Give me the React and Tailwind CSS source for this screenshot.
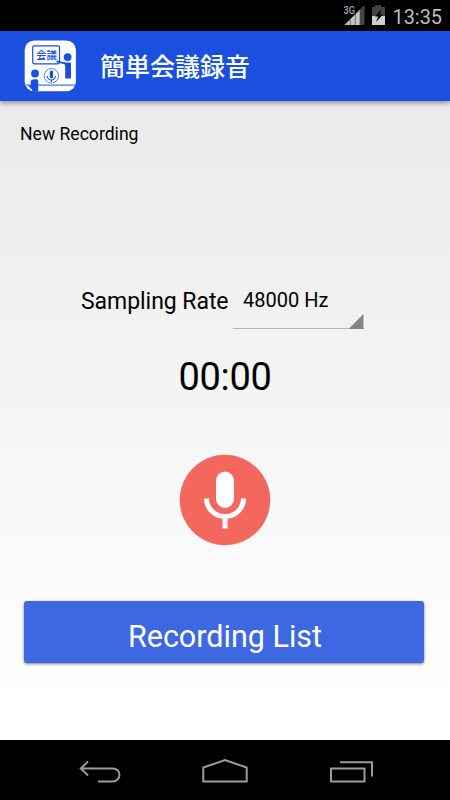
function StatusBar() {
  return (
    <div className="flex h-[31px] justify-end bg-black">
      <svg width="120" height="31" viewBox="330 0 120 31">
        <text x="343.5" y="14.2" fill="#a8a8a8" fontSize="10.5" fontWeight="500" textLength="11.5" lengthAdjust="spacingAndGlyphs">
          3G
        </text>
        <path d="M364.5 5v20h-20z" fill="#444" />
        <path d="M360 9.5V25h-15.5z" fill="#c3c3c3" />
        <path d="M350.3 18v7M355.4 14v11M360 9v16" stroke="#555" strokeWidth="0.7" />
        <path d="M372 7h3V5h6v2h4v9h-13z" fill="#444" />
        <path d="M372 16h13v9h-13z" fill="#cfcfcf" />
        <path d="M381.5 9l-6.5 7.4h3.2l-2.2 5.6 7-7.6h-3.3z" fill="#000" />
        <text x="392.5" y="23.7" fill="#bebebe" fontSize="21" textLength="49.5" lengthAdjust="spacingAndGlyphs">
          13:35
        </text>
      </svg>
    </div>
  );
}

function AppLogo() {
  return (
    <svg width="52" height="52" viewBox="24 40.5 52 52">
      <rect x="24.7" y="41" width="51.2" height="50.8" rx="9.5" fill="#fff" />
      <g fill="none" stroke="#1a4fdf">
        <rect x="32.7" y="46.3" width="26.8" height="18" rx="1.5" strokeWidth="1.2" />
        <path d="M26 85.6h5M38 85.6h37.5" strokeWidth="1" />
        <circle cx="51.4" cy="76.3" r="7.2" strokeWidth="0.7" />
        <path d="M47.4 76.5a4 4 0 0 0 8 0M51.4 80.5v2" strokeWidth="1.1" />
        <path d="M56.5 61.8l8.5 2" strokeWidth="1.7" />
      </g>
      <g fill="#1a4fdf">
        <circle cx="67.6" cy="57.6" r="3.9" />
        <path d="M63.5 63h6a1.5 1.5 0 0 1 1.5 1.5V79h-5.8V66z" />
        <circle cx="35" cy="74" r="3.9" />
        <path d="M33.5 79.8h3.2a1.5 1.5 0 0 1 1.5 1.5V92h-6v-1.8l-4.5-4.3h3V81.3z" />
        <rect x="49.8" y="71" width="3.3" height="7.8" rx="1.65" />
        <text x="36" y="59.2" fontSize="10.5" fontWeight="500" textLength="21" className="font-['Noto_Sans_CJK_JP',sans-serif]">
          会議
        </text>
      </g>
    </svg>
  );
}

function Header() {
  return (
    <header className="relative flex h-[70px] items-center bg-[#1a4fdf] pl-6 shadow-[0_2px_5px_rgba(0,0,0,0.4)]">
      <AppLogo />
      <h1 className="ml-6 pb-0.5 font-['Noto_Sans_CJK_JP',sans-serif] text-[25px] leading-9 font-medium text-white">
        簡単会議録音
      </h1>
    </header>
  );
}

function RateSelect() {
  return (
    <button className="flex h-[49px] w-[131px] shrink-0 flex-col text-left">
      <span className="pt-1.5 pl-2.5 text-[20px] leading-[26px]">48000 Hz</span>
      <svg className="mt-px shrink-0" width="131" height="16" viewBox="0 0 131 16">
        <path d="M0 14.5h131" stroke="#b4b4b4" />
        <path d="M130.5 0v15h-15z" fill="#858585" />
      </svg>
    </button>
  );
}

function RecordButton() {
  return (
    <button className="mx-auto mt-[54px] block h-[92px] w-[92px]" aria-label="Record">
      <svg width="92" height="92" viewBox="179 454 92 92">
        <circle cx="225" cy="500" r="45" fill="#f4675c" stroke="#d6655d" strokeWidth="0.5" />
        <rect x="216" y="471.5" width="18" height="36.5" rx="9" fill="#fff" />
        <path d="M206.5 498.5a18.5 18 0 0 0 37 0M225 516v12.5" fill="none" stroke="#fff" strokeWidth="5" />
      </svg>
    </button>
  );
}

function NavBar() {
  return (
    <nav className="h-[60px] bg-black">
      <svg width="450" height="60" viewBox="0 740 450 60" fill="none" stroke="#9b9b9b" strokeWidth="2">
        <path d="M88 761.5l-7.2 7 7.2 7M81 768.5h32a6.4 6.4 0 0 1 0 12.9H98" />
        <path d="M203.3 781.5v-14l21.7-7.4 21.7 7.4v14z" />
        <path d="M331 768.5h33.5v13H331zM340 762.3h32v14.2" />
      </svg>
    </nav>
  );
}

export default function App() {
  return (
    <div className="flex h-[800px] w-[450px] flex-col overflow-hidden bg-white font-[Roboto,sans-serif] text-black">
      <StatusBar />
      <Header />
      <main className="flex-1 bg-linear-to-b from-[#eaeaea] to-white to-95%">
        <p className="pt-[21px] pl-5 text-[17.6px] leading-6">New Recording</p>
        <div className="mt-[135px] flex pl-[81px]">
          <span className="w-[152px] pt-2 text-[23px] leading-[26px] tracking-[-0.05px]">Sampling Rate</span>
          <RateSelect />
        </div>
        <p className="mt-6 text-center text-[38px] leading-[46px] tracking-[-0.3px]">00:00</p>
        <RecordButton />
        <button className="mt-[55px] ml-6 block h-[62px] w-[400px] rounded-[3px] bg-[#3d68e1] pt-[9px] pl-0.5 text-[30.5px] leading-[54px] text-white shadow-[0_1px_3px_rgba(0,0,0,0.5)]">
          Recording List
        </button>
      </main>
      <NavBar />
    </div>
  );
}
